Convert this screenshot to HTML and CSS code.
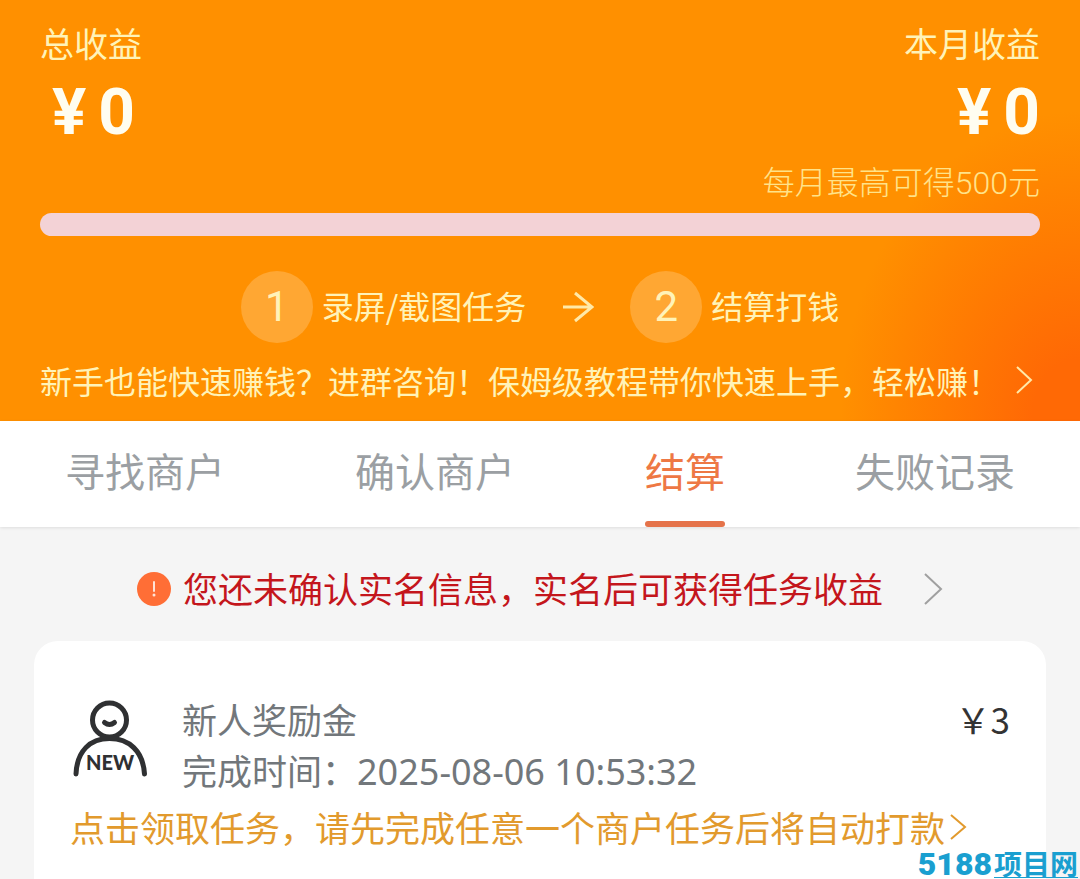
FILE: index.html
```html
<!DOCTYPE html>
<html lang="zh-CN">
<head>
<meta charset="utf-8">
<meta name="viewport" content="width=device-width, initial-scale=1">
<title>结算</title>
<link rel="stylesheet" href="styles.css">
</head>
<body>
<header class="hero">
  <div class="summary">
    <section class="summary-item">
      <h2 class="summary-label">总收益</h2>
      <p class="summary-amount"><span class="currency">¥</span>0</p>
    </section>
    <section class="summary-item summary-item-end">
      <h2 class="summary-label">本月收益</h2>
      <p class="summary-amount"><span class="currency">¥</span>0</p>
    </section>
  </div>
  <p class="cap">每月最高可得500元</p>
  <div class="progress" role="progressbar" aria-label="本月收益" aria-valuemin="0" aria-valuemax="500" aria-valuenow="0"></div>
  <ol class="steps">
    <li class="step"><span class="step-number">1</span><span class="step-label">录屏/截图任务</span></li>
    <li class="step-arrow" aria-hidden="true">
      <svg width="32" height="32" viewBox="0 0 32 32"><path d="M1 16H29M13 2L30 16L13 30"/></svg>
    </li>
    <li class="step"><span class="step-number">2</span><span class="step-label">结算打钱</span></li>
  </ol>
  <a class="promo" href="#">
    <span>新手也能快速赚钱？进群咨询！保姆级教程带你快速上手，轻松赚！</span>
    <svg class="promo-chevron" width="18" height="28" viewBox="0 0 18 28"><path d="M2 1L16 14L2 27"/></svg>
  </a>
</header>
<nav class="tabs">
  <button class="tab" type="button">寻找商户</button>
  <button class="tab" type="button">确认商户</button>
  <button class="tab tab-active" type="button" aria-current="page">结算</button>
  <button class="tab" type="button">失败记录</button>
</nav>
<main class="content">
  <a class="alert" href="#">
    <svg width="34" height="34" viewBox="0 0 34 34"><circle cx="17" cy="17" r="17" fill="#ff6e36"/><path d="M17 10V19" stroke="#ffe3d6" stroke-width="2" stroke-linecap="round"/><circle cx="17" cy="23" r="1.500" fill="#ffe3d6"/></svg>
    <span class="alert-text">您还未确认实名信息，实名后可获得任务收益</span>
    <svg class="alert-chevron" width="20" height="34" viewBox="0 0 20 34"><path d="M2 2L18 17L2 32"/></svg>
  </a>
  <article class="card">
    <div class="reward">
      <svg class="reward-icon" width="74" height="78" viewBox="0 0 74 78">
        <g fill="none" stroke="#2f3032" stroke-width="5" stroke-linecap="round">
          <circle cx="36.500" cy="20" r="17"/>
          <path d="M31.500 22.500Q36.500 26.500 41.500 22.500"/>
          <path d="M3 74C4 51 17 38.500 36.500 38.500S70 51 71.500 74"/>
        </g>
        <text class="reward-badge" x="37" y="70" text-anchor="middle">NEW</text>
      </svg>
      <div class="reward-info">
        <h3 class="reward-title">新人奖励金</h3>
        <p class="reward-time">完成时间：<time datetime="2025-08-06T10:53:32">2025-08-06 10:53:32</time></p>
      </div>
      <p class="reward-amount">￥3</p>
    </div>
    <a class="note" href="#">
      <span>点击领取任务，请先完成任意一个商户任务后将自动打款</span>
      <svg width="18" height="28" viewBox="0 0 18 28"><path d="M2 2L16 14L2 26"/></svg>
    </a>
  </article>
</main>
<div class="watermark"><span class="watermark-number">5188</span><span class="watermark-name">项目网</span></div>
</body>
</html>
```
FILE: styles.css
```css
* {
  box-sizing: border-box;
}

body {
  display: flex;
  flex-direction: column;
  margin: 0;
  min-height: 100vh;
  position: relative;
  background: #f5f5f5;
  font-family: "Noto Sans CJK SC", sans-serif;
}

h2, h3, p, ol {
  margin: 0;
  padding: 0;
  font-weight: 400;
}

a {
  text-decoration: none;
}

svg {
  flex: none;
}

.hero {
  padding: 19px 40px 19px;
  color: #fff3b8;
  background: radial-gradient(ellipse 240px 310px at 100% 100%, #ff6905 20%, #ff7a02 55%, #ff9000 100%) #ff9000;
}

.summary {
  display: flex;
  justify-content: space-between;
}

.summary-item-end {
  text-align: right;
}

.summary-label {
  font-size: 34px;
  line-height: 48px;
}

.summary-amount {
  color: #fffdf0;
  font-family: Roboto, sans-serif;
  font-size: 64px;
  font-weight: 700;
  line-height: 92px;
}

.currency {
  margin: 0 12px;
}

.cap {
  color: #ffe38a;
  font-family: Roboto, "Noto Sans CJK SC", sans-serif;
  font-size: 32px;
  font-weight: 300;
  line-height: 48px;
  text-align: right;
}

.progress {
  height: 23px;
  margin-top: 6px;
  border-radius: 12px;
  background: #f3d2d6;
}

.steps {
  display: flex;
  align-items: center;
  justify-content: center;
  gap: 36px;
  margin-top: 35px;
  list-style: none;
  font-size: 32px;
}

.step {
  display: flex;
  align-items: center;
  gap: 9px;
}

.step-number {
  width: 72px;
  height: 72px;
  border-radius: 50%;
  background: #ffa733;
  font-family: Roboto, sans-serif;
  font-size: 42px;
  line-height: 72px;
  text-align: center;
}

.step-label {
  padding-bottom: 4px;
  line-height: 44px;
}

.step-arrow {
  display: flex;
}

.step-arrow svg,
.promo-chevron {
  fill: none;
  stroke: #ffe9a8;
  stroke-width: 3;
}

.promo {
  display: flex;
  align-items: center;
  justify-content: space-between;
  margin-top: 15px;
  padding-right: 7px;
  color: #fff3b8;
  font-size: 32px;
  line-height: 44px;
  white-space: nowrap;
}

.promo .promo-chevron {
  stroke-width: 2;
}

.tabs {
  display: flex;
  justify-content: space-between;
  padding: 0 65px;
  background: #fff;
  box-shadow: 0 1px 3px #00000018;
}

.tab {
  display: flex;
  flex-direction: column;
  height: 106px;
  padding: 0;
  border: 0;
  background: none;
  color: #9b9fa3;
  font: inherit;
  font-size: 40px;
  line-height: 98px;
}

.tab-active {
  color: #ee7844;
}

.tab-active::after {
  content: "";
  width: 100%;
  height: 6px;
  margin-top: 2px;
  border-radius: 3px;
  background: #e5734a;
}

.content {
  display: flex;
  flex: 1;
  flex-direction: column;
  padding: 0 34px;
}

.alert {
  display: flex;
  align-items: center;
  justify-content: center;
  gap: 12px;
  height: 114px;
  padding-top: 9px;
  color: #c4161c;
  font-size: 35px;
  line-height: 48px;
}

.alert-text {
  padding-bottom: 2px;
}

.alert-chevron {
  margin-left: 28px;
  fill: none;
  stroke: #a0a0a0;
  stroke-width: 2;
}

.card {
  flex: 1;
  padding: 52px 36px 24px;
  border-radius: 24px 24px 0 0;
  background: #fff;
}

.reward {
  display: flex;
}

.reward-icon {
  margin: 7px 35px 0 3px;
}

.reward-badge {
  fill: #2f3032;
  font: 900 20px Lato, sans-serif;
}

.reward-info {
  flex: 1;
  color: #72777b;
  font-size: 35px;
  line-height: 51px;
}

.reward-title {
  font-size: inherit;
}

.reward-time time {
  font-family: "Noto Sans", sans-serif;
  font-size: 36px;
}

.reward-amount {
  color: #333;
  font-size: 35px;
  line-height: 51px;
}

.note {
  display: flex;
  align-items: center;
  gap: 4px;
  margin-top: 4px;
  color: #e29a2d;
  font-size: 35px;
  line-height: 51px;
  white-space: nowrap;
}

.note svg {
  fill: none;
  stroke: currentColor;
  stroke-width: 2;
}

.watermark {
  position: absolute;
  right: 2px;
  bottom: 1px;
  display: flex;
  align-items: flex-end;
  gap: 2px;
  color: #1a9fd0;
  font-weight: 700;
}

.watermark-number {
  font-family: Roboto, sans-serif;
  font-size: 32px;
  font-weight: 900;
  line-height: 28px;
}

.watermark-name {
  border-bottom: 1px solid #1a9fd0;
  font-size: 28px;
  line-height: 28px;
}
```
